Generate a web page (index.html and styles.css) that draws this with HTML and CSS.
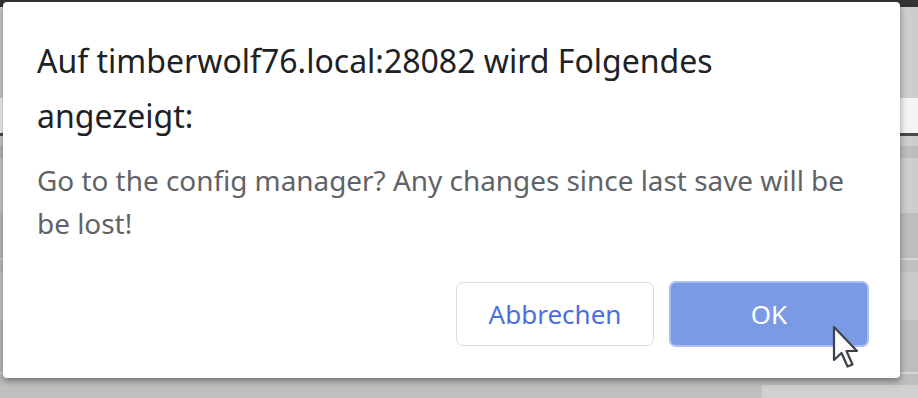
FILE: index.html
```html
<!DOCTYPE html>
<html lang="de">
<head>
    <meta charset="UTF-8">
    <meta name="viewport" content="width=device-width, initial-scale=1.0">
    <title>Konfiguration</title>
    <link rel="stylesheet" href="styles.css">
</head>
<body>
    <div class="page">
        <div class="topbar"></div>
        <div class="row r-head"></div>
        <div class="row r-toolbar"></div>
        <div class="row r-sep"></div>
        <div class="row r-a"></div>
        <div class="row r-b"></div>
        <div class="row r-a2"></div>
        <div class="row r-b2"></div>
        <div class="row r-line"></div>
        <div class="row r-c"></div>
        <div class="row r-d"></div>
        <div class="row r-b3"></div>
        <div class="row r-line"></div>
        <div class="row r-c2"></div>
        <div class="row r-foot">
            <div class="foot-left"></div>
            <div class="foot-right"></div>
        </div>
    </div>

    <div class="dialog">
        <div class="dialog-title">Auf timberwolf76.local:28082 wird Folgendes angezeigt:</div>
        <div class="dialog-message">Go to the config manager? Any changes since last save will be be lost!</div>
        <div class="dialog-buttons">
            <button class="btn btn-cancel">Abbrechen</button>
            <button class="btn btn-ok">OK</button>
        </div>
    </div>

    <svg class="cursor" width="27" height="44" viewBox="0 0 27 44">
        <path d="M2 2 L2 35 L9.5 28 L15.5 41.5 L20.5 39.5 L14.5 26 L25 26 Z" fill="#fbfbfb" stroke="#3d4247" stroke-width="2.2" stroke-linejoin="round"/>
    </svg>
</body>
</html>
```

FILE: styles.css
```css
body {
    margin: 0;
    width: 918px;
    height: 398px;
    overflow: hidden;
    font-family: "Noto Sans", "Open Sans", sans-serif;
    background-color: #cdcdcd;
}
.page {
    display: flex;
    flex-direction: column;
    height: 398px;
}
.topbar {
    height: 7px;
    background-color: #333333;
}
.row {
    flex: none;
}
.r-head { height: 91px; background-color: #cdcdcd; }
.r-toolbar { height: 35px; background-color: #f4f4f4; }
.r-sep { height: 3px; background-color: #4a4a4a; }
.r-a { height: 10px; background-color: #cdcdcd; }
.r-b { height: 12px; background-color: #bdbdbd; }
.r-a2 { height: 55px; background-color: #cdcdcd; }
.r-b2 { height: 45px; background-color: #bdbdbd; }
.r-line { height: 2px; background-color: #d6d6d6; }
.r-c { height: 12px; background-color: #c0c0c0; }
.r-d { height: 48px; background-color: #c9c9c9; }
.r-b3 { height: 52px; background-color: #bdbdbd; }
.r-c2 { height: 11px; background-color: #bebebe; }
.r-foot {
    flex: 1;
    display: flex;
}
.foot-left {
    width: 762px;
    background-color: #c0c0c0;
}
.foot-right {
    flex: 1;
    background-color: #d0d0d0;
}

.dialog {
    position: absolute;
    left: 3px;
    top: 2px;
    width: 897px;
    height: 376px;
    box-sizing: border-box;
    padding: 31px 31px 31px 34px;
    background: #fff;
    border-radius: 4px;
    box-shadow: 0 3px 7px rgba(0, 0, 0, 0.4);
    display: flex;
    flex-direction: column;
}
.dialog-title {
    font-size: 32px;
    line-height: 55px;
    color: #202124;
}
.dialog-message {
    margin-top: 16px;
    font-size: 27.9px;
    line-height: 43px;
    color: #5f6368;
}
.dialog-buttons {
    margin-top: auto;
    display: flex;
    justify-content: flex-end;
    align-items: center;
    gap: 15px;
}
.btn {
    font-family: inherit;
    font-size: 26px;
    border-radius: 7px;
    cursor: pointer;
}
.btn-cancel {
    width: 198px;
    height: 64px;
    background: #fff;
    color: #4a6fe0;
    border: 1px solid #dadce0;
}
.btn-ok {
    width: 200px;
    height: 66px;
    background: #7b9ae6;
    color: #fff;
    border: 2px solid #aabcf2;
}
.cursor {
    position: absolute;
    left: 832px;
    top: 325px;
}
```
